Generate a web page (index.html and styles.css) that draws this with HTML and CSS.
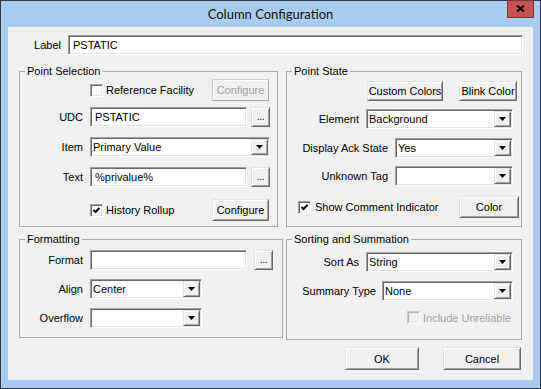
FILE: index.html
```html
<!DOCTYPE html>
<html>
<head>
<meta charset="utf-8">
<title>Column Configuration</title>
<link rel="stylesheet" href="styles.css">
</head>
<body>
<div class="window">
  <div class="titlebar">
    <div class="title">Column Configuration</div>
    <div class="close">
      <svg width="9" height="7" viewBox="0 0 9 7"><path d="M1 0.5 L8 6.5 M8 0.5 L1 6.5" stroke="#000" stroke-width="2"/></svg>
    </div>
  </div>
  <div class="client">
    <div class="label-row">
      <span class="lbl lbl-label">Label</span>
      <div class="input w-label">PSTATIC</div>
    </div>

    <div class="groups">
      <fieldset class="group g-top">
        <legend>Point Selection</legend>
        <div class="row chkrow ps-ref">
          <span class="chk"></span><span class="chk-text">Reference Facility</span>
          <span class="btn disabled b-conf">Configure</span>
        </div>
        <div class="row ps-udc">
          <span class="lbl lw-ps">UDC</span>
          <div class="input w-ps-in">PSTATIC</div>
          <span class="btn browse">...</span>
        </div>
        <div class="row ps-item">
          <span class="lbl lw-ps">Item</span>
          <div class="combo w-ps-combo"><span class="val">Primary Value</span><span class="drop"><svg width="7" height="4" viewBox="0 0 7 4"><path d="M0 0 H7 L3.5 4 Z" fill="#000"/></svg></span></div>
        </div>
        <div class="row ps-text">
          <span class="lbl lw-ps">Text</span>
          <div class="input w-ps-in">%privalue%</div>
          <span class="btn browse">...</span>
        </div>
        <div class="row chkrow ps-hist">
          <span class="chk"><svg width="9" height="9" viewBox="0 0 9 9"><path d="M1.5 4 L3.5 6 L7.5 2" stroke="#000" stroke-width="2" fill="none"/></svg></span><span class="chk-text">History Rollup</span>
          <span class="btn b-conf">Configure</span>
        </div>
      </fieldset>

      <fieldset class="group g-top">
        <legend>Point State</legend>
        <div class="row st-btns">
          <span class="btn b-custom">Custom Colors</span>
          <span class="btn b-blink">Blink Color</span>
        </div>
        <div class="row st-elem">
          <span class="lbl lw-st">Element</span>
          <div class="combo w-st-combo"><span class="val">Background</span><span class="drop"><svg width="7" height="4" viewBox="0 0 7 4"><path d="M0 0 H7 L3.5 4 Z" fill="#000"/></svg></span></div>
        </div>
        <div class="row st-ack">
          <span class="lbl lw-ack">Display Ack State</span>
          <div class="combo w-ack-combo"><span class="val">Yes</span><span class="drop"><svg width="7" height="4" viewBox="0 0 7 4"><path d="M0 0 H7 L3.5 4 Z" fill="#000"/></svg></span></div>
        </div>
        <div class="row st-unk">
          <span class="lbl lw-ack">Unknown Tag</span>
          <div class="combo w-ack-combo"><span class="val"></span><span class="drop"><svg width="7" height="4" viewBox="0 0 7 4"><path d="M0 0 H7 L3.5 4 Z" fill="#000"/></svg></span></div>
        </div>
        <div class="row chkrow st-cmt">
          <span class="chk"><svg width="9" height="9" viewBox="0 0 9 9"><path d="M1.5 4 L3.5 6 L7.5 2" stroke="#000" stroke-width="2" fill="none"/></svg></span><span class="chk-text">Show Comment Indicator</span>
          <span class="btn b-color">Color</span>
        </div>
      </fieldset>

      <fieldset class="group g-fmt">
        <legend>Formatting</legend>
        <div class="row f-format">
          <span class="lbl lw-ps">Format</span>
          <div class="input w-ps-in"></div>
          <span class="btn browse browse-fmt">...</span>
        </div>
        <div class="row f-align">
          <span class="lbl lw-ps">Align</span>
          <div class="combo w-fmt-combo"><span class="val">Center</span><span class="drop"><svg width="7" height="4" viewBox="0 0 7 4"><path d="M0 0 H7 L3.5 4 Z" fill="#000"/></svg></span></div>
        </div>
        <div class="row f-over">
          <span class="lbl lw-ps">Overflow</span>
          <div class="combo w-fmt-combo"><span class="val"></span><span class="drop"><svg width="7" height="4" viewBox="0 0 7 4"><path d="M0 0 H7 L3.5 4 Z" fill="#000"/></svg></span></div>
        </div>
      </fieldset>

      <fieldset class="group g-sort">
        <legend>Sorting and Summation</legend>
        <div class="row so-sort">
          <span class="lbl lw-st">Sort As</span>
          <div class="combo w-st-combo"><span class="val">String</span><span class="drop"><svg width="7" height="4" viewBox="0 0 7 4"><path d="M0 0 H7 L3.5 4 Z" fill="#000"/></svg></span></div>
        </div>
        <div class="row so-sum">
          <span class="lbl lw-sum">Summary Type</span>
          <div class="combo w-sum-combo"><span class="val">None</span><span class="drop"><svg width="7" height="4" viewBox="0 0 7 4"><path d="M0 0 H7 L3.5 4 Z" fill="#000"/></svg></span></div>
        </div>
        <div class="row chkrow so-inc">
          <span class="chk disabled"></span><span class="chk-text disabled-text">Include Unreliable</span>
        </div>
      </fieldset>
    </div>

    <div class="footer">
      <span class="btn b-ok">OK</span>
      <span class="btn b-cancel">Cancel</span>
    </div>
  </div>
</div>
</body>
</html>
```
FILE: styles.css
```css
* { box-sizing: border-box; }
html, body { margin: 0; padding: 0; }
body {
  font-family: "Liberation Sans", Arial, sans-serif;
  font-size: 11px;
  color: #000;
  background: #fff;
}

.window {
  width: 541px;
  height: 389px;
  border: 1px solid #2f3942;
  background: #aacbee;
  display: flex;
  flex-direction: column;
}

.titlebar {
  flex: none;
  height: 26px;
  display: grid;
  grid-template-columns: 1fr auto 1fr;
}
.title {
  grid-column: 2;
  font-family: Lato, "Noto Sans", sans-serif;
  font-size: 13px;
  line-height: 26px;
  color: #151515;
  white-space: nowrap;
}
.close {
  grid-column: 3;
  justify-self: end;
  align-self: start;
  margin-top: -1px;
  margin-right: 6px;
  width: 27px;
  height: 18px;
  background: #c75050;
  border: 1px solid #6e3a3a;
  display: flex;
  align-items: center;
  justify-content: center;
  padding-bottom: 1px;
}
.close svg { display: block; }

.client {
  flex: none;
  margin: 0 7px 8px 7px;
  height: 353px;
  background: #f0f0f0;
  padding-top: 8px;
}

.label-row {
  display: flex;
  align-items: center;
  height: 20px;
}
.lbl { text-align: right; white-space: nowrap; flex: none; }
.lbl-label { width: 53px; margin-right: 7px; }
.w-label { width: 455px; }

/* sunken text box */
.input {
  flex: none;
  height: 20px;
  background: #fff;
  border: 1px solid;
  border-color: #a0a0a0 #fff #fff #a0a0a0;
  box-shadow: inset 1px 1px #696969, inset -1px -1px #e3e3e3;
  padding: 0 4px;
  display: flex;
  align-items: center;
  white-space: nowrap;
  overflow: hidden;
}

/* combo box */
.combo {
  flex: none;
  height: 20px;
  background: #fff;
  border: 1px solid;
  border-color: #a0a0a0 #fff #fff #a0a0a0;
  box-shadow: inset 1px 1px #696969, inset -1px -1px #e3e3e3;
  padding-left: 2px;
  display: flex;
  align-items: center;
  white-space: nowrap;
}
.combo .val { flex: 1; overflow: hidden; }
.drop {
  flex: none;
  width: 17px;
  height: 16px;
  margin-right: 1px;
  background: #f0f0f0;
  border: 1px solid;
  border-color: #e3e3e3 #696969 #696969 #e3e3e3;
  box-shadow: inset 1px 1px #fff, inset -1px -1px #a0a0a0;
  display: flex;
  align-items: center;
  justify-content: center;
}
.drop svg { display: block; }

/* raised push button */
.btn {
  flex: none;
  display: flex;
  align-items: center;
  justify-content: center;
  background: #f0f0f0;
  border: 1px solid;
  border-color: #e3e3e3 #696969 #696969 #e3e3e3;
  box-shadow: inset 1px 1px #fff, inset -1px -1px #a0a0a0;
  white-space: nowrap;
}
.btn.disabled {
  color: #a0a0a0;
  border-color: #cfcfcf #a8a8a8 #a8a8a8 #cfcfcf;
  box-shadow: inset 1px 1px #fff;
}
.browse {
  width: 19px;
  height: 20px;
  margin-left: 4px;
  align-items: flex-end;
  padding-bottom: 4px;
  color: #2a1a60;
  letter-spacing: -0.5px;
}
.browse-fmt { margin-left: 7px; }

/* checkbox */
.chk {
  flex: none;
  width: 13px;
  height: 13px;
  background: #fff;
  border: 1px solid;
  border-color: #a0a0a0 #fff #fff #a0a0a0;
  box-shadow: inset 1px 1px #696969, inset -1px -1px #e3e3e3;
  display: flex;
  align-items: center;
  justify-content: center;
}
.chk svg { display: block; }
.chk.disabled {
  background: #f0f0f0;
  border-color: #c8c8c8 #fff #fff #c8c8c8;
  box-shadow: inset 1px 1px #b4b4b4, inset -1px -1px #e8e8e8;
}
.chk-text { margin-left: 3px; white-space: nowrap; }
.disabled-text { color: #a0a0a0; }

/* group boxes */
.groups {
  display: grid;
  grid-template-columns: 259px 236px;
  column-gap: 8px;
  row-gap: 6px;
  align-items: start;
  padding-left: 11px;
  margin-top: 10px;
}
.group {
  margin: 0;
  padding: 0;
  min-width: 0;
  border: 1px solid #a9a9a9;
}
.group legend {
  margin-left: 5px;
  padding: 0 2px;
  line-height: 13px;
  font-size: 11px;
}
.g-top { height: 162px; }
.g-fmt { height: 105px; width: 264px; }
.g-sort { height: 107px; }

.row {
  display: flex;
  align-items: center;
}

/* Point Selection */
.lw-ps { width: 63px; margin-right: 7px; }
.w-ps-in { width: 157px; }
.w-ps-combo { width: 180px; }
.chkrow { padding-left: 70px; padding-right: 8px; }
.chkrow .btn { margin-left: auto; }
.ps-ref { margin-top: 1px; height: 22px; }
.ps-udc { margin-top: 6px; height: 20px; }
.ps-item { margin-top: 10px; height: 20px; }
.ps-text { margin-top: 10px; height: 20px; }
.ps-hist { margin-top: 12px; height: 22px; }
.b-conf { width: 57px; height: 22px; }

/* Point State */
.st-btns {
  margin-top: 3px;
  height: 20px;
  justify-content: flex-end;
  gap: 16px;
  padding-right: 4px;
}
.b-custom { width: 76px; height: 20px; }
.b-blink { width: 58px; height: 20px; }
.lw-st { width: 72px; margin-right: 7px; }
.w-st-combo { width: 147px; }
.lw-ack { width: 101px; margin-right: 7px; }
.w-ack-combo { width: 118px; }
.st-elem { margin-top: 8px; height: 20px; }
.st-ack { margin-top: 9px; height: 20px; }
.st-unk { margin-top: 8px; height: 20px; }
.st-cmt { margin-top: 10px; height: 22px; padding-left: 11px; padding-right: 2px; }
.st-cmt .chk-text { margin-left: 4px; }
.b-color { width: 60px; height: 22px; }

/* Formatting */
.w-fmt-combo { width: 112px; }
.f-format { margin-top: 4px; height: 20px; }
.f-align { margin-top: 9px; height: 20px; }
.f-over { margin-top: 9px; height: 20px; }

/* Sorting */
.lw-sum { width: 89px; margin-right: 6px; }
.w-sum-combo { width: 131px; }
.so-sort { margin-top: 6px; height: 20px; }
.so-sum { margin-top: 9px; height: 20px; }
.so-inc { margin-top: 10px; height: 13px; padding-left: 120px; }

/* footer */
.footer {
  display: flex;
  justify-content: flex-end;
  gap: 24px;
  margin-top: 7px;
  padding-right: 12px;
}
.b-ok { width: 74px; height: 23px; }
.b-cancel { width: 78px; height: 23px; }
```
